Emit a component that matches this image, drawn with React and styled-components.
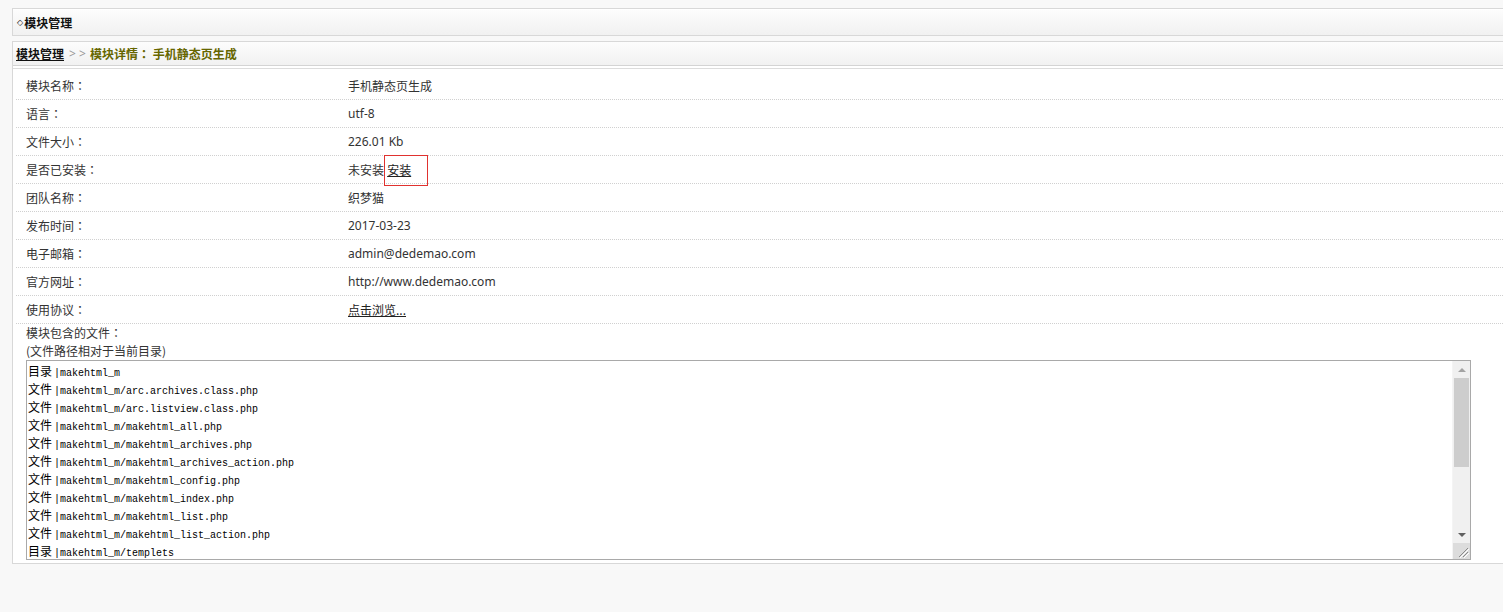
import styled, { createGlobalStyle } from 'styled-components';

const GlobalStyle = createGlobalStyle`
	html, body {
		margin: 0;
		padding: 0;
		background: #f8f8f8;
		overflow: hidden;
	}
	body {
		font-family: "Noto Sans", "Noto Sans CJK SC", sans-serif;
		font-size: 12px;
		color: #333;
	}
`;

const Page = styled.div`
	display: flex;
	flex-direction: column;
	gap: 5px;
	padding: 8px 0 0 12px;
	width: 1492px;
`;

const TitleBar = styled.div`
	height: 26px;
	display: flex;
	align-items: center;
	padding-left: 4px;
	border: 1px solid #d8d8d8;
	background: linear-gradient(to bottom, #fdfdfd, #f1f1f1);
	box-shadow: inset 0 1px 0 #fff;
	font-family: "Noto Sans CJK SC", sans-serif;
	font-weight: bold;
	color: #111;
`;

const Diamond = styled.span`
	font-family: "DejaVu Sans", sans-serif;
	font-size: 8px;
	font-weight: normal;
	margin-right: 1px;
`;

const Panel = styled.div`
	border: 1px solid #d8d8d8;
	background: #fff;
	padding-bottom: 3px;
`;

const PanelHead = styled.div`
	height: 23px;
	display: flex;
	align-items: center;
	padding-left: 3px;
	border-bottom: 1px solid #d4d4d4;
	background: linear-gradient(to bottom, #fdfdfd, #f1f1f1);
	font-family: "Noto Sans CJK SC", sans-serif;
	font-weight: bold;
`;

const CrumbLink = styled.a`
	color: #111;
	text-decoration: underline;
	cursor: pointer;
`;

const CrumbSep = styled.span`
	font-family: "Noto Sans", sans-serif;
	color: #999;
	font-weight: normal;
	margin: 0 4px 0 5px;
	white-space: pre;
`;

const CrumbCurrent = styled.span`
	color: #666600;
`;

const Colon = styled.span`
	font-family: "Noto Sans CJK JP", sans-serif;
`;

const Body = styled.div`
	margin-top: 2px;
	border-top: 1px solid #dcdcdc;
	padding: 3px 0 0 3px;
`;

const InfoRow = styled.div`
	display: grid;
	grid-template-columns: 322px 1fr;
	align-items: center;
	height: 27px;
	padding-left: 10px;
	border-bottom: 1px dotted #d0d0d0;
`;

const Label = styled.span`
	font-family: "Noto Sans CJK SC", sans-serif;
`;

const Value = styled.span`
	position: relative;
	font-family: "Noto Sans", "Noto Sans CJK SC", sans-serif;
`;

const ValueLink = styled.a`
	color: #222;
	text-decoration: underline;
	cursor: pointer;
	font-family: "Noto Sans CJK SC", sans-serif;
`;

const Mark = styled.span`
	position: absolute;
	left: 36px;
	top: -6px;
	width: 42px;
	height: 29px;
	border: 1px solid #e0322f;
	pointer-events: none;
`;

const FilesBlock = styled.div`
	padding-left: 10px;
	font-family: "Noto Sans CJK SC", sans-serif;
	line-height: 18px;
`;

const FileBox = styled.div`
	display: flex;
	width: 1443px;
	height: 198px;
	border: 1px solid #a9a9a9;
	background: #fff;
	color: #000;
`;

const FileList = styled.div`
	flex: 1;
	overflow: hidden;
	padding: 1px 0 0 1px;
	line-height: 18px;
`;

const FileLine = styled.div`
	white-space: nowrap;
	height: 18px;
`;

const Kind = styled.span`
	font-family: "Noto Sans CJK SC", sans-serif;
	font-size: 12px;
`;

const Path = styled.span`
	font-family: "Liberation Mono", monospace;
	font-size: 10px;
	margin-left: 2px;
`;

const ScrollBar = styled.div`
	width: 17px;
	display: flex;
	flex-direction: column;
	background: #f0f0f0;
	border-left: 1px solid #f4f4f4;
`;

const ArrowButton = styled.div`
	height: 17px;
	display: flex;
	align-items: center;
	justify-content: center;

	&::after {
		content: '';
		width: 0;
		height: 0;
		border-left: 4px solid transparent;
		border-right: 4px solid transparent;
		${({ $down }) =>
			$down
				? 'border-top: 4px solid #606060;'
				: 'border-bottom: 4px solid #a3a3a3;'}
	}
`;

const Thumb = styled.div`
	height: 89px;
	margin: 0 1px;
	background: #cdcdcd;
`;

const Track = styled.div`
	flex: 1;
`;

const Corner = styled.div`
	height: 16px;
	background: #dcdcdc;
	display: flex;
	align-items: flex-end;
	justify-content: flex-end;
`;

const files = [
	['目录', 'makehtml_m'],
	['文件', 'makehtml_m/arc.archives.class.php'],
	['文件', 'makehtml_m/arc.listview.class.php'],
	['文件', 'makehtml_m/makehtml_all.php'],
	['文件', 'makehtml_m/makehtml_archives.php'],
	['文件', 'makehtml_m/makehtml_archives_action.php'],
	['文件', 'makehtml_m/makehtml_config.php'],
	['文件', 'makehtml_m/makehtml_index.php'],
	['文件', 'makehtml_m/makehtml_list.php'],
	['文件', 'makehtml_m/makehtml_list_action.php'],
	['目录', 'makehtml_m/templets'],
];

const info = [
	['模块名称', '手机静态页生成'],
	['语言', 'utf-8'],
	['文件大小', '226.01 Kb'],
	['是否已安装', null],
	['团队名称', '织梦猫'],
	['发布时间', '2017-03-23'],
	['电子邮箱', 'admin@dedemao.com'],
	['官方网址', 'http://www.dedemao.com'],
	['使用协议', 'license'],
];

const renderValue = (v) => {
	if (v === null) {
		return (
			<Value>
				<Label>未安装</Label> <ValueLink>安装</ValueLink>
				<Mark />
			</Value>
		);
	}
	if (v === 'license') {
		return (
			<Value>
				<ValueLink>点击浏览...</ValueLink>
			</Value>
		);
	}
	return <Value>{v}</Value>;
};

export default function App() {
	return (
		<>
			<GlobalStyle />
			<Page>
				<TitleBar>
					<Diamond>◇</Diamond>模块管理
				</TitleBar>
				<Panel>
					<PanelHead>
						<CrumbLink>模块管理</CrumbLink>
						<CrumbSep>&gt; &gt;</CrumbSep>
						<CrumbCurrent>
							模块详情<Colon>：</Colon> 手机静态页生成
						</CrumbCurrent>
					</PanelHead>
					<Body>
						{info.map(([label, value]) => (
							<InfoRow key={label}>
								<Label>
									{label}
									<Colon>：</Colon>
								</Label>
								{renderValue(value)}
							</InfoRow>
						))}
						<FilesBlock>
							模块包含的文件<Colon>：</Colon>
							<br />
							(文件路径相对于当前目录)
							<FileBox>
								<FileList>
									{files.map(([kind, path]) => (
										<FileLine key={path}>
											<Kind>{kind}</Kind>
											<Path>|{path}</Path>
										</FileLine>
									))}
								</FileList>
								<ScrollBar>
									<ArrowButton />
									<Thumb />
									<Track />
									<ArrowButton $down />
									<Corner>
										<svg width="16" height="16" viewBox="0 0 16 16">
											<path d="M14 5 L5 14 M14 9 L9 14" stroke="#8a8a8a" strokeWidth="1" fill="none" />
											<path d="M15 6 L6 15 M15 10 L10 15" stroke="#fff" strokeWidth="1" fill="none" />
										</svg>
									</Corner>
								</ScrollBar>
							</FileBox>
						</FilesBlock>
					</Body>
				</Panel>
			</Page>
		</>
	);
}
